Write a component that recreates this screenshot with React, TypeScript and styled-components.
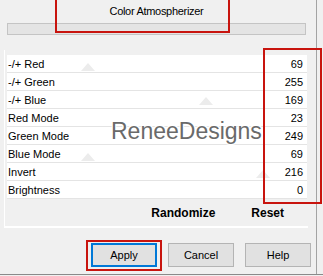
import React from "react";
import styled, { createGlobalStyle } from "styled-components";

const GlobalStyle = createGlobalStyle`
    html, body {
        margin: 0;
        padding: 0;
        background: #f0f0f0;
        font-family: "Liberation Sans", Arial, sans-serif;
        color: #000;
    }
`;

const Window = styled.div`
    position: relative;
    width: 323px;
    height: 275px;
    box-sizing: border-box;
    border-bottom: 1px solid #8a8a8a;
    overflow: hidden;
`;

const Content = styled.div`
    display: flex;
    flex-direction: column;
    width: 317px;
    height: 100%;
    box-sizing: border-box;
    border-right: 1px solid #a3a3a3;
`;

const Title = styled.div`
    margin-left: 7px;
    width: 299px;
    height: 23px;
    line-height: 23px;
    text-align: center;
    font-size: 11px;
    letter-spacing: -0.3px;
`;

const Track = styled.div`
    margin-left: 7px;
    width: 299px;
    height: 12px;
    box-sizing: border-box;
    border: 1px solid #c4c4c4;
    background: #e4e4e4;
`;

const Panel = styled.div`
    display: flex;
    flex-direction: column;
    margin: 15px 0 0 4px;
    width: 304px;
    padding: 5px 0 0 2px;
    box-sizing: border-box;
    border-left: 1px solid #ffffff;
    border-bottom: 2px solid #ffffff;
`;

const List = styled.div`
    width: 300px;
    background: #ffffff;
`;

const Row = styled.div`
    display: flex;
    align-items: center;
    justify-content: space-between;
    height: 17px;
    padding: 0 4px 0 1px;
    border-bottom: 1px solid #e4e4e4;
    font-size: 11px;
`;

const Footer = styled.div`
    display: flex;
    justify-content: flex-end;
    align-items: center;
    gap: 36px;
    height: 27px;
    padding-right: 24px;
    font-size: 12px;
    font-weight: bold;
`;

const ButtonRow = styled.div`
    display: flex;
    justify-content: flex-end;
    gap: 11px;
    margin-top: 15px;
    padding-right: 5px;
`;

const Button = styled.button<{ $primary?: boolean }>`
    width: 66px;
    height: 24px;
    box-sizing: border-box;
    background: #e1e1e1;
    border: 1px solid ${({ $primary }) => ($primary ? "#0078d7" : "#b4b4b4")};
    box-shadow: ${({ $primary }) => ($primary ? "inset 0 0 0 1px #0078d7" : "none")};
    font-family: "Liberation Sans", Arial, sans-serif;
    font-size: 11px;
    color: #000;
    padding: 0;
`;

const RedBox = styled.div`
    position: absolute;
    box-sizing: border-box;
    border: 2px solid #c8140e;
    pointer-events: none;
`;

const Watermark = styled.div`
    position: absolute;
    left: 111px;
    top: 118px;
    font-family: "Liberation Sans", Arial, sans-serif;
    font-size: 23px;
    color: #6a6a6a;
    text-shadow: 1px 1px 0 #ffffff, -1px -1px 0 #ffffff, 1px -1px 0 #ffffff, -1px 1px 0 #ffffff;
    pointer-events: none;
`;

const Mark = styled.div`
    position: absolute;
    width: 0;
    height: 0;
    border-left: 7px solid transparent;
    border-right: 7px solid transparent;
    border-bottom: 8px solid #ececec;
`;

const rows = [
    { label: "-/+ Red", value: 69 },
    { label: "-/+ Green", value: 255 },
    { label: "-/+ Blue", value: 169 },
    { label: "Red Mode", value: 23 },
    { label: "Green Mode", value: 249 },
    { label: "Blue Mode", value: 69 },
    { label: "Invert", value: 216 },
    { label: "Brightness", value: 0 },
];

// faint watermark triangles
const marks = [
    { left: 81, top: 63 },
    { left: 199, top: 97 },
    { left: 81, top: 153 },
    { left: 256, top: 170 },
];

const App: React.FC = () => {
    return (
        <>
            <GlobalStyle />
            <Window>
                <Content>
                    <Title>Color Atmospherizer</Title>
                    <Track />
                    <Panel>
                        <List>
                            {rows.map((r) => (
                                <Row key={r.label}>
                                    <span>{r.label}</span>
                                    <span>{r.value}</span>
                                </Row>
                            ))}
                        </List>
                        <Footer>
                            <span>Randomize</span>
                            <span>Reset</span>
                        </Footer>
                    </Panel>
                    <ButtonRow>
                        <Button $primary>Apply</Button>
                        <Button>Cancel</Button>
                        <Button>Help</Button>
                    </ButtonRow>
                </Content>

                {marks.map((m, i) => (
                    <Mark key={i} style={{ left: m.left, top: m.top }} />
                ))}
                <Watermark>ReneeDesigns</Watermark>

                <RedBox style={{ left: 55, top: -5, width: 175, height: 38 }} />
                <RedBox style={{ left: 263, top: 48, width: 59, height: 156 }} />
                <RedBox style={{ left: 86, top: 240, width: 76, height: 31 }} />
            </Window>
        </>
    );
};

export default App;
